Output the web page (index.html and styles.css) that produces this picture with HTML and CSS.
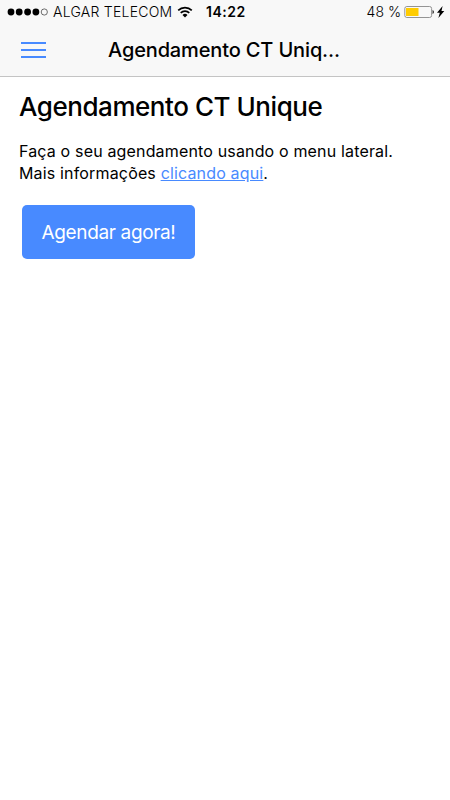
FILE: index.html
```html
<!DOCTYPE html>
<html lang="pt-BR">
<head>
  <meta charset="UTF-8" />
  <meta name="viewport" content="width=device-width, initial-scale=1" />
  <title>Agendamento CT Unique</title>
  <link rel="stylesheet" href="styles.css">
</head>
<body>
  <header class="header">
    <div class="statusbar">
      <svg class="signal" width="41" height="8" viewBox="0 0 41 8">
        <circle cx="4" cy="4" r="3.4" />
        <circle cx="12.2" cy="4" r="3.4" />
        <circle cx="20.6" cy="4" r="3.4" />
        <circle cx="28.9" cy="4" r="3.4" />
        <circle class="empty" cx="37.3" cy="4" r="3.1" />
      </svg>
      <span class="carrier">ALGAR TELECOM</span>
      <svg class="wifi" width="16" height="12" viewBox="0 0 16 12">
        <path d="M1.2 4.4a9.6 9.6 0 0 1 13.6 0M3.7 6.9a6.1 6.1 0 0 1 8.6 0" />
        <path class="fill" d="M5.5 8.9a3.6 3.6 0 0 1 5 0L8 11.4z" />
      </svg>
      <span class="clock">14:22</span>
      <span class="percent">48 %</span>
      <svg class="battery" width="41" height="14" viewBox="0 0 41 14">
        <rect class="shell" x=".8" y="1.5" width="26.8" height="11" rx="2" />
        <rect class="level" x="2" y="3" width="12.5" height="8" />
        <path d="M28.6 5c1.6.5 1.6 3.5 0 4z" />
        <path d="M38.6 1l-5.6 6.8h2.8l-1.4 5.2 5.9-7h-2.8z" />
      </svg>
    </div>
    <div class="toolbar">
      <button class="menu-btn" aria-label="Menu"><span></span><span></span><span></span></button>
      <div class="toolbar-title">Agendamento CT Uniq...</div>
    </div>
  </header>

  <main class="content">
    <h1>Agendamento CT Unique</h1>
    <p>Faça o seu agendamento usando o menu lateral.<br>
      Mais informações <a href="#">clicando aqui</a>.</p>
    <button class="btn">Agendar agora!</button>
  </main>
</body>
</html>
```
FILE: styles.css
```css
* {
  box-sizing: border-box;
}

body {
  margin: 0;
  min-height: 800px;
  font-family: Inter, Roboto, sans-serif;
  color: #000;
  background-color: #fff;
}

.header {
  height: 77px;
  background-color: #f8f8f8;
  border-bottom: 1px solid #c4c4c4;
}

.statusbar {
  display: flex;
  align-items: center;
  height: 24px;
  padding: 0 5px 0 7px;
  font-size: 14px;
  line-height: 24px;
  white-space: nowrap;
}

.statusbar svg {
  flex: none;
}

.signal .empty {
  fill: none;
  stroke: #333;
  stroke-width: .7;
}

.carrier {
  width: 120px;
  margin-left: 5px;
  font-weight: 300;
  letter-spacing: .25px;
}

.wifi {
  margin-left: 4px;
}

.wifi path {
  fill: none;
  stroke: #000;
  stroke-width: 1.6;
}

.wifi .fill {
  fill: #000;
  stroke: none;
}

.clock {
  margin-left: 13px;
  font-weight: 600;
  letter-spacing: .5px;
}

.percent {
  margin-left: auto;
  font-weight: 300;
}

.battery {
  margin-left: 3px;
}

.battery .shell {
  fill: none;
  stroke: #888;
  stroke-width: .9;
}

.battery .level {
  fill: #ffcc00;
}

.toolbar {
  display: flex;
  align-items: center;
  height: 52px;
}

.menu-btn {
  display: flex;
  flex-direction: column;
  gap: 5px;
  width: 25px;
  margin-left: 21px;
  padding: 0;
  border: none;
  background: none;
}

.menu-btn span {
  width: 100%;
  height: 2px;
  background-color: #488aff;
}

.toolbar-title {
  margin-left: 62px;
  white-space: nowrap;
  font-size: 20px;
  font-weight: 500;
  line-height: 28px;
  letter-spacing: -.14px;
}

.content {
  padding: 14px 19px;
}

h1 {
  margin: 0;
  font-size: 26px;
  font-weight: 500;
  line-height: 32px;
  letter-spacing: -.45px;
}

p {
  margin: 17px 0 21px;
  font-size: 16px;
  font-weight: 400;
  line-height: 22px;
  letter-spacing: .16px;
}

a {
  color: #488aff;
}

.btn {
  display: block;
  width: 173px;
  height: 54px;
  margin-left: 3px;
  padding: 0;
  border: none;
  border-radius: 5px;
  font-family: inherit;
  font-size: 19px;
  font-weight: 400;
  letter-spacing: -.35px;
  color: #fff;
  background-color: #488aff;
}
```
